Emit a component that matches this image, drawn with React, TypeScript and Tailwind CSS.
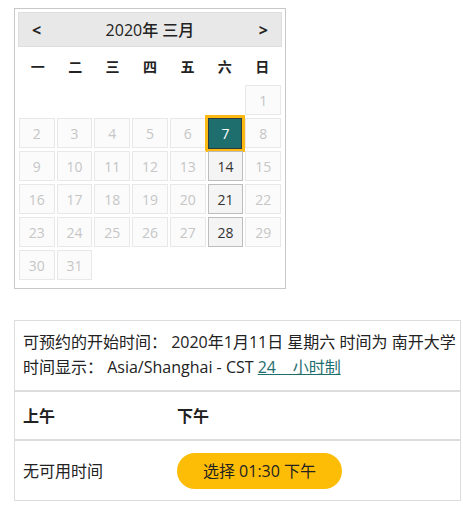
import React from 'react'

const font = { fontFamily: '"Open Sans", "Noto Sans CJK SC", sans-serif' }

const weekdays = ['一', '二', '三', '四', '五', '六', '日']
const open = [14, 21, 28]

function DayCell({ day }: { day: number }) {
  if (day === 7) {
    return (
      <div className="flex h-[30px] items-center justify-center">
        <div className="flex h-[37px] w-[40px] shrink-0 items-center justify-center border-[3px] border-[#fdb913] bg-white">
          <div className="flex h-full w-full items-center justify-center border border-[#2b3a3a] bg-[#1f6e6e] text-[14px] text-white">
            7
          </div>
        </div>
      </div>
    )
  }
  const isOpen = open.includes(day)
  return (
    <div
      className={
        isOpen
          ? 'flex h-[30px] items-center justify-center border border-[#bdbdbd] bg-[#f4f4f4] text-[14px] text-[#333]'
          : 'flex h-[30px] items-center justify-center border border-[#e8e8e8] bg-[#fbfbfb] text-[14px] text-[#c6c6c6]'
      }
    >
      {day}
    </div>
  )
}

export default function App() {
  const days = Array.from({ length: 31 }, (_, i) => i + 1)
  return (
    <div className="min-h-[517px] w-[463px] overflow-hidden bg-white pl-[14px] pt-[8px] text-[#222]" style={font}>
      {/* Calendar */}
      <div className="w-[272px] border border-[#c8c8c8] px-[3px] pb-[8px] pt-[3px]">
        <div className="flex h-[35px] items-center justify-between border border-[#dedede] bg-[#e8e8e8] px-[13px]">
          <span className="text-[16px] font-bold">&lt;</span>
          <span className="text-[16px] font-medium">2020年 三月</span>
          <span className="text-[16px] font-bold">&gt;</span>
        </div>
        <div className="grid h-[38px] grid-cols-7 items-center px-px">
          {weekdays.map((w) => (
            <div key={w} className="text-center text-[14px] font-bold">
              {w}
            </div>
          ))}
        </div>
        <div className="grid grid-cols-7 gap-x-[2px] gap-y-[3px] px-px">
          {Array.from({ length: 6 }).map((_, i) => (
            <div key={'e' + i} />
          ))}
          {days.map((d) => (
            <DayCell key={d} day={d} />
          ))}
        </div>
      </div>

      {/* Available times */}
      <div className="mt-[31px] w-[447px] border border-[#dcdcdc]">
        <div className="px-[8px] pb-[10px] pt-[9px] text-[16px] leading-[25px]">
          <div className="whitespace-nowrap">可预约的开始时间： 2020年1月11日 星期六 时间为 南开大学</div>
          <div className="whitespace-nowrap">
            时间显示： Asia/Shanghai - CST{' '}
            <span className="text-[#1f6e6e] underline">24&nbsp;&nbsp;&nbsp; 小时制</span>
          </div>
        </div>
        <div className="flex h-[49px] items-center border-t-2 border-[#dcdcdc] text-[16px] font-bold">
          <div className="w-[162px] pl-[8px]">上午</div>
          <div>下午</div>
        </div>
        <div className="flex h-[61px] items-center border-t-2 border-[#dcdcdc] text-[16px]">
          <div className="w-[162px] pl-[8px]">无可用时间</div>
          <button className="h-[36px] w-[165px] rounded-full bg-[#fdbd06] text-[16px] text-[#222]">
            选择 01:30 下午
          </button>
        </div>
      </div>
    </div>
  )
}
